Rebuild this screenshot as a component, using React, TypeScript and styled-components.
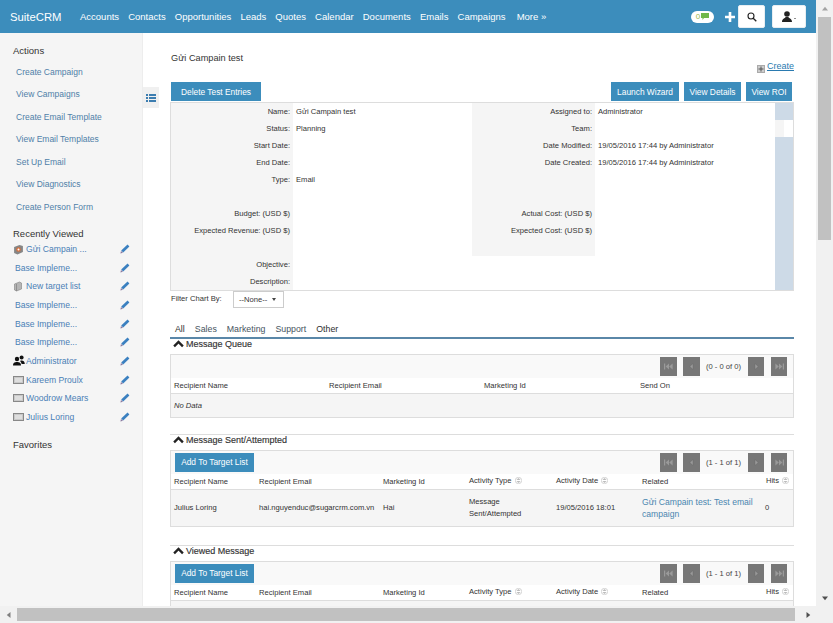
import React from "react";
import styled, { createGlobalStyle } from "styled-components";

const Global = createGlobalStyle`
  html, body { margin: 0; padding: 0; width: 833px; height: 623px; overflow: hidden; background: #fff; }
  * { box-sizing: border-box; }
  body { font-family: "Liberation Sans", Arial, sans-serif; font-size: 7.6px; color: #333; }
`;

const Frame = styled.div`display: grid; grid-template-columns: 816px 17px; grid-template-rows: 606px 17px; width: 833px; height: 623px; overflow: hidden;`;
const Viewport = styled.div`display: flex; flex-direction: column; overflow: hidden; position: relative;`;
const VBar = styled.div`background: #f1f1f1; display: flex; flex-direction: column; align-items: center;`;
const HBar = styled.div`background: #f1f1f1; display: flex; align-items: center;`;
const Corner = styled.div`background: #f1f1f1;`;
const VThumb = styled.div`width: 13px; height: 223px; background: #c1c1c1;`;
const HThumb = styled.div`width: 778px; height: 13px; background: #c1c1c1;`;
const ArrowBox = styled.div`width: 17px; height: 17px; flex: none; display: flex; align-items: center; justify-content: center;`;

const Header = styled.header`height: 33px; flex: none; background: #3c8dbc; display: flex; align-items: center; color: #fff; padding-left: 10px;`;
const Brand = styled.div`font-size: 11.3px; width: 70px; flex: none;`;
const Nav = styled.nav`display: flex; gap: 9.1px; font-size: 9.5px; flex: 1;`;
const NavItem = styled.span<{ $gap?: number }>`margin-right: ${(p) => p.$gap ?? 0}px;`;
const HeaderTools = styled.div`display: flex; align-items: center; padding-right: 10px;`;
const Notif = styled.div`width: 23px; height: 12px; border-radius: 6px; background: #fff; color: #9ab84a; font-size: 8px; display: flex; align-items: center; justify-content: center; gap: 1px; margin-right: 11px;`;
const PlusSlot = styled.span`display: flex; margin-right: 3px;`;
const ToolBtn = styled.div<{ $w: number; $mr?: number }>`
  width: ${(p) => p.$w}px; height: 23px; background: #fff; border-radius: 2px; border: 1px solid #e8eef2; display: flex; align-items: center; justify-content: center; color: #222; gap: 2px; margin-right: ${(p) => p.$mr ?? 0}px;
`;
const Caret = styled.span`width: 0; height: 0; border-left: 1.5px solid transparent; border-right: 1.5px solid transparent; border-top: 1.5px solid #222; margin-top: 3px;`;

const Body = styled.div`flex: 1; display: flex; min-height: 0;`;
const Sidebar = styled.aside`width: 143px; flex: none; background: #f5f5f5; border-right: 1px solid #ededed; padding: 13px 0 0 13px; color: #444;`;
const SideHead = styled.div<{ $top?: number }>`font-size: 9.5px; line-height: 10px; color: #333; margin-top: ${(p) => p.$top ?? 0}px;`;
const ActionList = styled.div`margin-top: 4.7px;`;
const ActionLink = styled.div`height: 22.5px; line-height: 11px; padding: 6px 0 0 3px; font-size: 8.5px; color: #4f7fa8;`;
const RecentList = styled.div`margin-top: 0.6px;`;
const RecentRow = styled.div<{ $noicon?: boolean }>`
  height: 18.65px; display: flex; align-items: center; font-size: 8.6px; color: #4a7fb5; padding-left: ${(p) => (p.$noicon ? 2 : 0)}px; width: 117px;
`;
const RecentIcon = styled.span`width: 13px; height: 12px; flex: none; display: flex; align-items: center;`;
const RecentName = styled.span`flex: 1; white-space: nowrap;`;

const Toggle = styled.div`position: absolute; left: 143px; top: 87px; width: 16px; height: 21px; background: #f0f0f0; display: flex; align-items: center; justify-content: center;`;

const Main = styled.main`flex: 1; padding: 19px 0 0 27px; min-width: 0;`;
const TitleRow = styled.div`height: 30px; width: 624px;`;
const Title = styled.div`font-size: 9.2px; line-height: 12px; padding-left: 1px;`;
const CreateLink = styled.div`display: flex; justify-content: flex-end; align-items: flex-start; gap: 2px; font-size: 9px; line-height: 10px; color: #2a7ab0; margin-top: -3px;`;
const CreateIcon = styled.svg`margin-top: 4px; flex: none;`;
const CreateText = styled.span`text-decoration: underline;`;
const ButtonRow = styled.div`display: flex; height: 20px; gap: 5px; width: 624px; padding: 0 2px 0 1px;`;
const Spacer = styled.div`flex: 1;`;
const Btn = styled.div<{ $w: number }>`
  width: ${(p) => p.$w}px; height: 19px; background: #3c8dbc; color: #fff; font-size: 8.4px; font-weight: 400;
  display: flex; align-items: center; justify-content: center; white-space: nowrap; flex: none;
`;

const Details = styled.div`
  display: grid; grid-template-columns: 122px 179px 123px 180px 18px; grid-auto-rows: 17px; border: 1px solid #ddd; border-bottom-width: 1.5px; width: 624px;
`;
const DLabel = styled.div<{ $white?: boolean }>`background: ${(p) => (p.$white ? "#fff" : "#f5f5f5")}; text-align: right; padding: 4px 3px 0 0; line-height: 10px; color: #333; white-space: nowrap;`;
const DValue = styled.div`background: #fff; padding: 4px 0 0 3px; line-height: 10px; color: #333; white-space: nowrap;`;
const DSide = styled.div<{ $white?: boolean }>`background: ${(p) => (p.$white ? "linear-gradient(to right,#f5f5f5 50%,#fff 50%)" : "#cddae7")};`;

const FilterRow = styled.div`display: flex; height: 31px; color: #333; padding-left: 1px;`;
const FilterLabel = styled.div`width: 62px; padding-top: 3px; line-height: 10px;`;
const Select = styled.div`width: 51px; height: 17px; border: 1px solid #ccc; display: flex; align-items: center; padding-left: 5px; gap: 5px;`;
const Tabs = styled.div`display: flex; height: 16.5px; border-bottom: 2px solid #5a87a8; font-size: 8.8px; line-height: 14px; padding-left: 5px; gap: 10px; width: 624px;`;
const Tab = styled.span<{ $dark?: boolean }>`color: ${(p) => (p.$dark ? "#2f2f2f" : "#46545e")};`;
const SectionWrap = styled.div<{ $line?: boolean; $top?: number }>`
  margin-top: ${(p) => p.$top ?? 0}px; width: 624px; ${(p) => (p.$line ? "border-top: 1px solid #ddd;" : "")}
`;
const SecTitle = styled.div`display: flex; align-items: center; gap: 2px; height: 15px; padding: 0 0 5px 3px; line-height: 10px; font-size: 9px; color: #333; -webkit-text-stroke: 0.15px #333;`;
const Panel = styled.div`border: 1px solid #ddd;`;
const Toolbar = styled.div`height: 23px; background: #f9f9f9; display: flex; align-items: center; padding: 0 6px 0 4px;`;
const Pager = styled.div`display: flex; align-items: center; margin-left: auto;`;
const PageBtn = styled.div<{ $w?: number; $ml?: number }>`
  width: ${(p) => p.$w ?? 17}px; height: 19px; background: #777; margin-left: ${(p) => p.$ml ?? 0}px; display: flex; align-items: center; justify-content: center;
`;
const PageText = styled.div`width: 47px; text-align: center; color: #444;`;
const HeadRow = styled.div<{ $cols: string }>`
  display: grid; grid-template-columns: ${(p) => p.$cols}; height: 16px; background: #fff; border-bottom: 1.5px solid #ddd; align-items: center; color: #333; padding-left: 3px; white-space: nowrap;
`;
const Sort = styled.span`display: inline-block; margin-left: 3px; vertical-align: -1px;`;
const DataRow = styled.div<{ $cols: string; $h: number }>`
  display: grid; grid-template-columns: ${(p) => p.$cols}; height: ${(p) => p.$h}px; background: #f5f5f5; align-items: center; color: #333; padding: 1px 0 0 3px; line-height: 12px; white-space: nowrap;
`;
const Italic = styled.span`font-style: italic; color: #333;`;
const RelLink = styled.span`color: #4a86b0; font-size: 8.6px;`;
const HitsHead = styled.span`text-align: right; padding-right: 4px;`;

const Tri = ({ dir, color = "#505050" }: { dir: "up" | "down" | "left" | "right"; color?: string }) => {
  const pts = { up: "1,6 5,1 9,6", down: "1,2 5,7 9,2", left: "7,0 2,4 7,8", right: "3,0 8,4 3,8" }[dir];
  return (
    <svg width="8" height="6" viewBox="0 0 10 8"><polygon points={pts} fill={color} /></svg>
  );
};
const Chevron = () => (
  <svg width="11" height="8" viewBox="0 0 12 8"><path d="M1.2 6.5 L6 1.8 L10.8 6.5" fill="none" stroke="#222" strokeWidth="2.6" /></svg>
);
const Pencil = () => (
  <svg width="10" height="10" viewBox="0 0 10 10">
    <path d="M7.5.6 9.4 2.5 3.2 8.4 1.2 6.6Z" fill="#3b80c0" />
    <path d="M1 7 3 8.8 .4 9.6Z" fill="#8a7aa0" />
  </svg>
);
const ListIcon = () => (
  <svg width="10" height="8" viewBox="0 0 10 8" fill="#3c7db0">
    <rect x="0" y="0" width="2" height="2" /><rect x="3" y="0" width="7" height="2" />
    <rect x="0" y="3" width="2" height="2" /><rect x="3" y="3" width="7" height="2" />
    <rect x="0" y="6" width="2" height="2" /><rect x="3" y="6" width="7" height="2" />
  </svg>
);
const CampaignIcon = () => (
  <svg width="11" height="11" viewBox="0 0 10 11">
    <path d="M.6 3 6 1 9.4 2 9.4 8 4 10.4.6 9Z" fill="#868686" />
    <circle cx="5" cy="5.5" r="2.3" fill="#d8703c" /><circle cx="5" cy="5.5" r="1" fill="#fff" />
  </svg>
);
const TargetIcon = () => (
  <svg width="10" height="11" viewBox="0 0 9 11">
    <path d="M1 3 6 1 8 2 8 8 3 10 1 9Z" fill="#b5b5b5" stroke="#808080" strokeWidth=".6" />
    <path d="M3 3V10" stroke="#777" strokeWidth=".6" />
  </svg>
);
const UsersIcon = () => (
  <svg width="12" height="11" viewBox="0 0 12 11" fill="#111">
    <circle cx="4" cy="4" r="2.2" /><path d="M0 10.5C0 7.5 2 7 4 7s4 .5 4 3.5Z" />
    <circle cx="8.6" cy="2.6" r="2" /><path d="M7 6c2-1 4.5-.5 4.8 3H8.6C8.4 8 8 7 7 6Z" />
  </svg>
);
const ContactIcon = () => (
  <svg width="11" height="8" viewBox="0 0 11 8">
    <rect x=".5" y=".5" width="10" height="7" fill="#c9c9c9" stroke="#888" />
    <rect x="2" y="2" width="7" height="4" fill="#dedede" />
  </svg>
);
const PagerGlyph = ({ kind }: { kind: "first" | "prev" | "next" | "last" }) => {
  const c = "#9a9a9a";
  if (kind === "prev") return <svg width="5" height="7" viewBox="0 0 5 7"><path d="M4 .5V6.5L.8 3.5Z" fill={c} stroke="#666" strokeWidth=".4" /></svg>;
  if (kind === "next") return <svg width="5" height="7" viewBox="0 0 5 7"><path d="M1 .5V6.5L4.2 3.5Z" fill={c} stroke="#666" strokeWidth=".4" /></svg>;
  if (kind === "first")
    return <svg width="9" height="7" viewBox="0 0 9 7" fill={c}><rect x="0" y=".5" width="1.2" height="6" /><path d="M5 .5V6.5L1.6 3.5Z" /><path d="M8.6 .5V6.5L5.2 3.5Z" /></svg>;
  return <svg width="9" height="7" viewBox="0 0 9 7" fill={c}><rect x="7.8" y=".5" width="1.2" height="6" /><path d="M4 .5V6.5L7.4 3.5Z" /><path d="M.4 .5V6.5L3.8 3.5Z" /></svg>;
};
const SortIcon = () => (
  <Sort>
    <svg width="7" height="7" viewBox="0 0 7 7"><circle cx="3.5" cy="3.5" r="3.2" fill="none" stroke="#bbb" strokeWidth=".6" /><path d="M1.5 3H5.5L3.5 1ZM1.5 4H5.5L3.5 6Z" fill="#bbb" /></svg>
  </Sort>
);

const navItems = ["Accounts", "Contacts", "Opportunities", "Leads", "Quotes", "Calendar", "Documents", "Emails", "Campaigns", "More »"];
const actions = ["Create Campaign", "View Campaigns", "Create Email Template", "View Email Templates", "Set Up Email", "View Diagnostics", "Create Person Form"];
const recents: { name: string; icon?: React.ReactNode }[] = [
  { name: "Gửi Campain ...", icon: <CampaignIcon /> },
  { name: "Base Impleme..." },
  { name: "New target list", icon: <TargetIcon /> },
  { name: "Base Impleme..." },
  { name: "Base Impleme..." },
  { name: "Base Impleme..." },
  { name: "Administrator", icon: <UsersIcon /> },
  { name: "Kareem Proulx", icon: <ContactIcon /> },
  { name: "Woodrow Mears", icon: <ContactIcon /> },
  { name: "Julius Loring", icon: <ContactIcon /> },
];
const details: [string, string, string, string][] = [
  ["Name:", "Gửi Campain test", "Assigned to:", "Administrator"],
  ["Status:", "Planning", "Team:", ""],
  ["Start Date:", "", "Date Modified:", "19/05/2016 17:44 by Administrator"],
  ["End Date:", "", "Date Created:", "19/05/2016 17:44 by Administrator"],
  ["Type:", "Email", "", ""],
  ["", "", "", ""],
  ["Budget: (USD $)", "", "Actual Cost: (USD $)", ""],
  ["Expected Revenue: (USD $)", "", "Expected Cost: (USD $)", ""],
  ["", "", "", ""],
  ["Objective:", "", "", ""],
  ["Description:", "", "", ""],
];

const sentCols = "85px 124px 86px 87px 86px 123px 1fr";
const queueCols = "155px 155px 156px 1fr";

const PagerBar = ({ text }: { text: string }) => (
  <Pager>
    <PageBtn><PagerGlyph kind="first" /></PageBtn>
    <PageBtn $ml={6}><PagerGlyph kind="prev" /></PageBtn>
    <PageText>{text}</PageText>
    <PageBtn $w={16} $ml={1}><PagerGlyph kind="next" /></PageBtn>
    <PageBtn $w={16} $ml={7}><PagerGlyph kind="last" /></PageBtn>
  </Pager>
);

const SentHead = () => (
  <HeadRow $cols={sentCols}>
    <span>Recipient Name</span>
    <span>Recipient Email</span>
    <span>Marketing Id</span>
    <span>Activity Type<SortIcon /></span>
    <span>Activity Date<SortIcon /></span>
    <span>Related</span>
    <HitsHead>Hits<SortIcon /></HitsHead>
  </HeadRow>
);

export default function App() {
  return (
    <>
      <Global />
      <Frame>
        <Viewport>
          <Header>
            <Brand>SuiteCRM</Brand>
            <Nav>
              {navItems.map((n) => (
                <NavItem key={n} $gap={n === "Campaigns" ? 2 : 0}>{n}</NavItem>
              ))}
            </Nav>
            <HeaderTools>
              <Notif>
                <span>0</span>
                <svg width="8" height="7" viewBox="0 0 8 7"><path d="M0 0H8V5H3L1.5 7V5H0Z" fill="#6fb84a" /></svg>
              </Notif>
              <PlusSlot>
                <svg width="10" height="10" viewBox="0 0 10 10"><path d="M3.7 0H6.3V3.7H10V6.3H6.3V10H3.7V6.3H0V3.7H3.7Z" fill="#fff" /></svg>
              </PlusSlot>
              <ToolBtn $w={27} $mr={7}>
                <svg width="10" height="10" viewBox="0 0 10 10"><circle cx="4" cy="4" r="3" fill="none" stroke="#222" strokeWidth="1.1" /><path d="M6.2 6.2 9.3 9.3" stroke="#222" strokeWidth="1.3" /></svg>
              </ToolBtn>
              <ToolBtn $w={34}>
                <svg width="10" height="11" viewBox="0 0 10 11" fill="#222"><circle cx="5" cy="3" r="2.8" /><path d="M0 11C0 7.5 3 7.5 3.6 6H6.4C7 7.5 10 7.5 10 11Z" /></svg>
                <Caret />
              </ToolBtn>
            </HeaderTools>
          </Header>
          <Body>
            <Sidebar>
              <SideHead>Actions</SideHead>
              <ActionList>
                {actions.map((a) => <ActionLink key={a}>{a}</ActionLink>)}
              </ActionList>
              <SideHead $top={11}>Recently Viewed</SideHead>
              <RecentList>
                {recents.map((r, i) => (
                  <RecentRow key={i} $noicon={!r.icon}>
                    {r.icon && <RecentIcon>{r.icon}</RecentIcon>}
                    <RecentName>{r.name}</RecentName>
                    <Pencil />
                  </RecentRow>
                ))}
              </RecentList>
              <SideHead $top={14}>Favorites</SideHead>
            </Sidebar>
            <Toggle><ListIcon /></Toggle>
            <Main>
              <TitleRow>
                <Title>Gửi Campain test</Title>
                <CreateLink>
                  <CreateIcon width="8" height="8" viewBox="0 0 8 8"><rect x=".5" y=".5" width="7" height="7" fill="#ccc" stroke="#aaa" /><path d="M4 1.5V6.5M1.5 4H6.5" stroke="#555" strokeWidth="1" /></CreateIcon>
                  <CreateText>Create</CreateText>
                </CreateLink>
              </TitleRow>
              <ButtonRow>
                <Btn $w={90}>Delete Test Entries</Btn>
                <Spacer />
                <Btn $w={68}>Launch Wizard</Btn>
                <Btn $w={57}>View Details</Btn>
                <Btn $w={46}>View ROI</Btn>
              </ButtonRow>
              <Details>
                {details.map((d, i) => (
                  <React.Fragment key={i}>
                    <DLabel>{d[0]}</DLabel>
                    <DValue>{d[1]}</DValue>
                    <DLabel $white={i > 8}>{d[2]}</DLabel>
                    <DValue>{d[3]}</DValue>
                    <DSide $white={i === 1} />
                  </React.Fragment>
                ))}
              </Details>
              <FilterRow>
                <FilterLabel>Filter Chart By:</FilterLabel>
                <Select>
                  <span>--None--</span>
                  <svg width="4" height="3" viewBox="0 0 4 3"><path d="M0 0H4L2 3Z" fill="#444" /></svg>
                </Select>
              </FilterRow>
              <Tabs>
                <Tab $dark>All</Tab><Tab>Sales</Tab><Tab>Marketing</Tab><Tab>Support</Tab><Tab $dark>Other</Tab>
              </Tabs>
              <SectionWrap>
                <SecTitle><Chevron />Message Queue</SecTitle>
                <Panel>
                  <Toolbar><PagerBar text="(0 - 0 of 0)" /></Toolbar>
                  <HeadRow $cols={queueCols}>
                    <span>Recipient Name</span><span>Recipient Email</span><span>Marketing Id</span><span>Send On</span>
                  </HeadRow>
                  <DataRow $cols="1fr" $h={23}><Italic>No Data</Italic></DataRow>
                </Panel>
              </SectionWrap>
              <SectionWrap $line $top={16}>
                <SecTitle><Chevron />Message Sent/Attempted</SecTitle>
                <Panel>
                  <Toolbar><Btn $w={79}>Add To Target List</Btn><PagerBar text="(1 - 1 of 1)" /></Toolbar>
                  <SentHead />
                  <DataRow $cols={sentCols} $h={36}>
                    <span>Julius Loring</span>
                    <span>hai.nguyenduc@sugarcrm.com.vn</span>
                    <span>Hai</span>
                    <span>Message<br />Sent/Attempted</span>
                    <span>19/05/2016 18:01</span>
                    <RelLink>Gửi Campain test: Test email<br />campaign</RelLink>
                    <span>0</span>
                  </DataRow>
                </Panel>
              </SectionWrap>
              <SectionWrap $line $top={18}>
                <SecTitle><Chevron />Viewed Message</SecTitle>
                <Panel>
                  <Toolbar><Btn $w={79}>Add To Target List</Btn><PagerBar text="(1 - 1 of 1)" /></Toolbar>
                  <SentHead />
                  <DataRow $cols="1fr" $h={36} />
                </Panel>
              </SectionWrap>
            </Main>
          </Body>
        </Viewport>
        <VBar>
          <ArrowBox><Tri dir="up" color="#a3a3a3" /></ArrowBox>
          <VThumb />
          <Spacer />
          <ArrowBox><Tri dir="down" /></ArrowBox>
        </VBar>
        <HBar>
          <ArrowBox><Tri dir="left" color="#808080" /></ArrowBox>
          <HThumb />
          <Spacer />
          <ArrowBox><Tri dir="right" /></ArrowBox>
        </HBar>
        <Corner />
      </Frame>
    </>
  );
}
